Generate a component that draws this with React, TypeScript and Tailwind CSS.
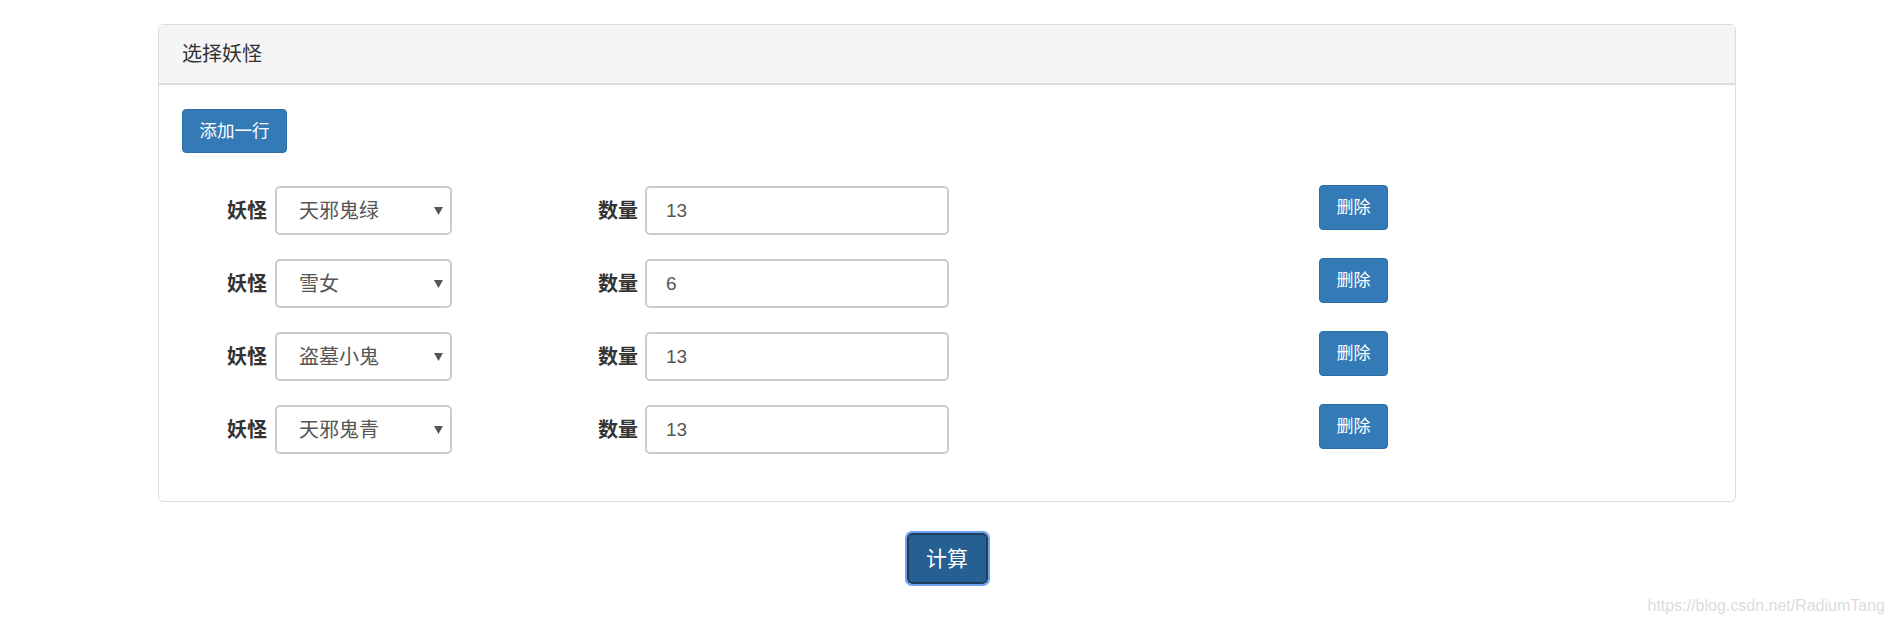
const font = "font-['Liberation_Sans','Noto_Sans_CJK_SC',sans-serif]";

const rows = [
  { name: "天邪鬼绿", count: "13" },
  { name: "雪女", count: "6" },
  { name: "盗墓小鬼", count: "13" },
  { name: "天邪鬼青", count: "13" },
];

const options = ["天邪鬼绿", "天邪鬼青", "天邪鬼赤", "天邪鬼黄", "雪女", "盗墓小鬼"];

function Row({ name, count }: { name: string; count: string }) {
  return (
    <div className="flex items-start pl-[45px]">
      <div className="flex h-[49px] w-[371px] items-center gap-2">
        <label className="text-[20px] font-bold text-[#333]">妖怪</label>
        <div className="relative">
          <select
            defaultValue={name}
            className="h-[49px] w-[177px] appearance-none rounded-[5px] border-2 border-[#ccc] bg-white pl-[22px] text-[20px] text-[#555] outline-none"
          >
            {options.map((o) => (
              <option key={o}>{o}</option>
            ))}
          </select>
          <svg className="pointer-events-none absolute right-[9px] top-[21px]" width="9" height="8" viewBox="0 0 9 8">
            <path d="M0 0 L9 0 L4.5 8 Z" fill="#555" />
          </svg>
        </div>
      </div>
      <div className="flex h-[49px] w-[721px] items-center gap-[7px]">
        <label className="text-[20px] font-bold text-[#333]">数量</label>
        <input
          defaultValue={count}
          className="h-[49px] w-[304px] rounded-[5px] border-2 border-[#ccc] bg-white pl-[19px] text-[19px] text-[#555] outline-none"
        />
      </div>
      <button className="-mt-px h-[45px] w-[69px] rounded-[4px] border border-[#2e6da4] bg-[#337ab7] text-[17px] text-white">
        删除
      </button>
    </div>
  );
}

export default function App() {
  return (
    <div className={`relative min-h-[626px] bg-white ${font}`}>
      <div className="px-[158px] pt-[24px]">
        <div className="rounded-[5px] border border-[#ddd]">
          <div className="flex h-[60px] items-center border-b-2 border-[#ddd] bg-[#f5f5f5] pl-[23px] text-[20px] text-[#333]">
            选择妖怪
          </div>
          <div className="px-[23px] pb-[47px] pt-[24px]">
            <button className="h-[44px] w-[105px] rounded-[4px] border border-[#2e6da4] bg-[#337ab7] text-[17.5px] text-white">
              添加一行
            </button>
            <div className="mt-[33px] flex flex-col gap-[24px]">
              {rows.map((r, i) => (
                <Row key={i} name={r.name} count={r.count} />
              ))}
            </div>
          </div>
        </div>
        <div className="flex justify-center pt-[31px]">
          <button className="h-[51px] w-[81px] rounded-[5px] border-2 border-[#1d3e5e] bg-[#265f91] text-[21px] text-white outline-2 outline-[#6ea4f0]">
            计算
          </button>
        </div>
      </div>
      <div className="absolute bottom-[8px] right-[9px] text-[16px] text-[#dcdcdc]">
        https://blog.csdn.net/RadiumTang
      </div>
    </div>
  );
}
